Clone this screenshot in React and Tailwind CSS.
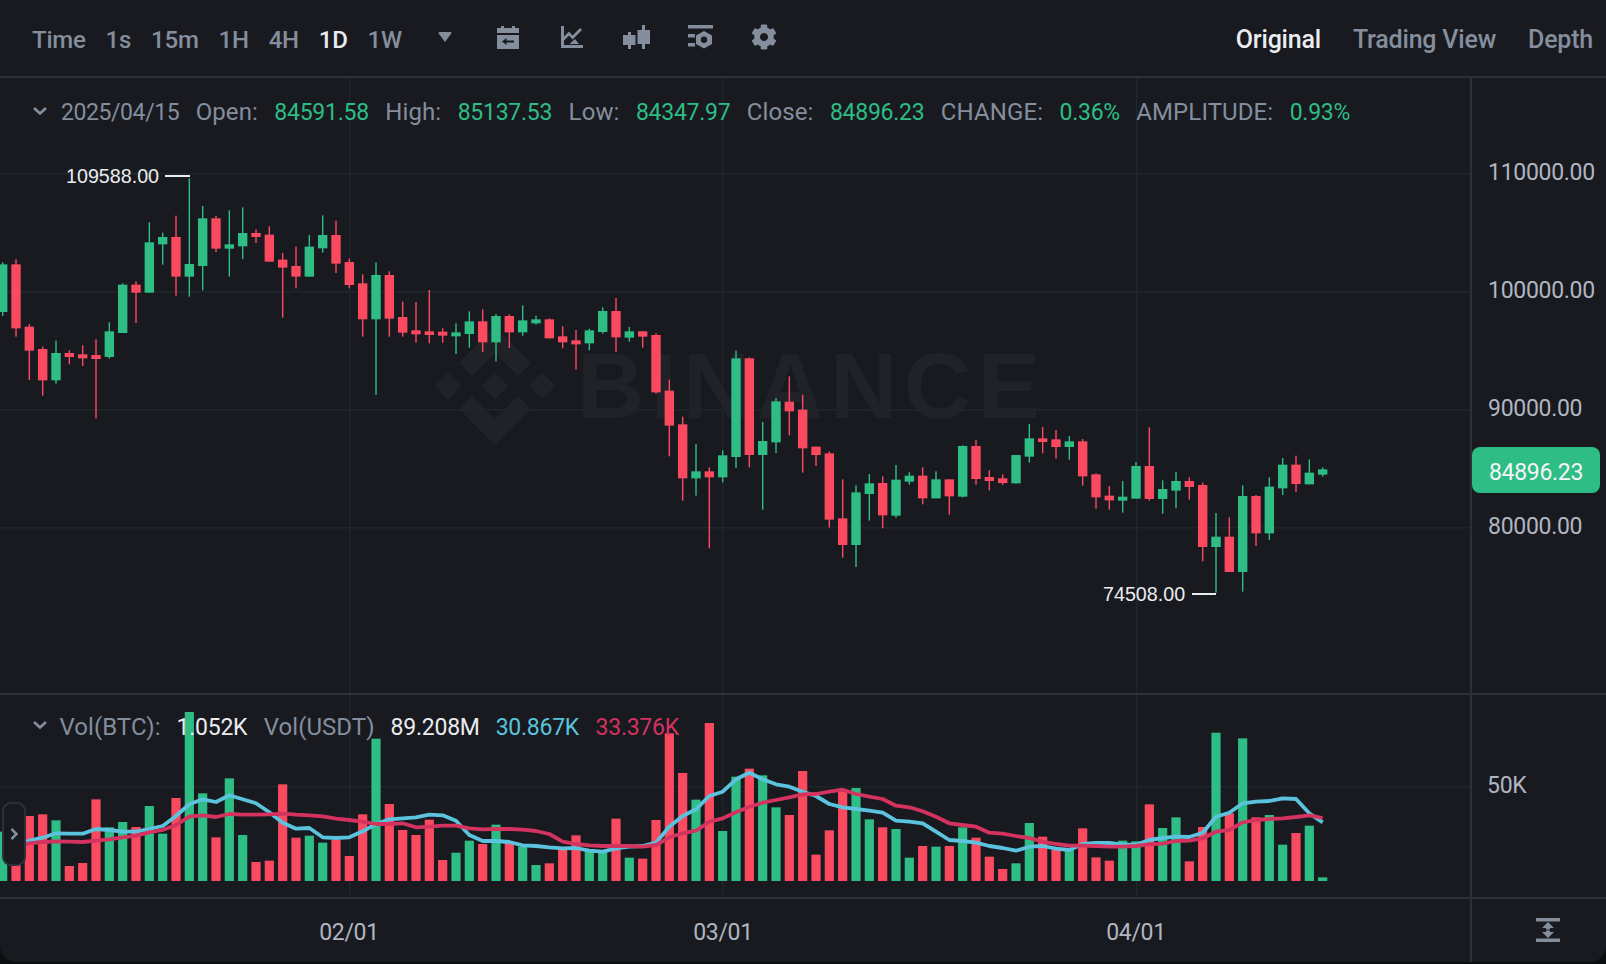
import React from 'react';
import { FaCog } from 'react-icons/fa';

const GREEN = '#2ebd85';
const RED = '#fb4a60';
const GRID = '#1f262b';

// rows: [color, wick top, body top, body bottom, wick bottom], offsets are in thirds of a pixel
const seg = (base, rows) =>
  rows.map(([c, a, b, d, e]) => ({
    up: c === 'g',
    wt: base + a / 3,
    bt: base + b / 3,
    bb: base + d / 3,
    wb: base + e / 3,
  }));

const CANDLES = [
  ...seg(150, [
    ['g', 337, 343, 486, 498], ['r', 328, 343, 535, 560], ['r', 522, 530, 602, 690], ['r', 590, 597, 691, 737],
    ['g', 572, 609, 691, 701], ['r', 601, 609, 621, 643], ['r', 586, 613, 625, 648], ['r', 568, 615, 627, 805],
    ['g', 517, 544, 621, 626], ['g', 400, 404, 549, 549], ['r', 394, 404, 428, 519], ['g', 217, 277, 428, 428],
    ['g', 248, 261, 283, 344], ['r', 197, 261, 380, 437], ['g', 85, 342, 380, 440], ['g', 168, 205, 348, 421],
    ['r', 198, 205, 296, 306], ['g', 181, 283, 296, 380], ['g', 172, 249, 289, 327], ['r', 238, 249, 261, 279],
    ['r', 229, 254, 335, 335], ['r', 309, 329, 353, 503], ['r', 290, 348, 380, 415], ['g', 255, 290, 380, 380],
    ['g', 196, 255, 295, 308], ['r', 212, 255, 341, 369], ['r', 326, 336, 405, 415], ['r', 373, 400, 508, 560],
    ['g', 337, 375, 508, 735], ['r', 364, 375, 506, 560], ['r', 455, 501, 548, 560], ['r', 456, 541, 553, 578],
    ['r', 420, 544, 555, 580], ['r', 535, 545, 557, 578],
  ]),
  ...seg(280, [
    ['g', 130, 157, 169, 222], ['g', 94, 124, 162, 203], ['r', 88, 124, 187, 216], ['g', 102, 108, 187, 244],
    ['r', 103, 108, 157, 204], ['g', 76, 121, 157, 167], ['g', 107, 118, 130, 134], ['r', 115, 118, 175, 175],
    ['r', 139, 169, 187, 205], ['r', 150, 181, 193, 269], ['g', 146, 151, 190, 211], ['g', 82, 93, 156, 161],
    ['r', 54, 93, 172, 216], ['g', 141, 154, 173, 185], ['r', 154, 154, 170, 203], ['r', 160, 165, 337, 341],
    ['r', 299, 332, 437, 529], ['r', 410, 433, 595, 662], ['g', 492, 574, 595, 647], ['r', 562, 574, 592, 805],
    ['g', 511, 526, 592, 607], ['g', 212, 235, 531, 564], ['r', 232, 235, 525, 562], ['g', 426, 483, 525, 689],
    ['g', 354, 364, 487, 519], ['r', 289, 365, 394, 466], ['r', 344, 389, 505, 578], ['r', 500, 500, 525, 558],
    ['r', 514, 520, 719, 743], ['r', 598, 715, 795, 833], ['g', 616, 637, 795, 861],
  ]),
  ...seg(400, [
    ['g', 222, 250, 282, 362], ['r', 229, 249, 346, 385], ['g', 195, 239, 347, 353], ['g', 217, 227, 245, 254],
    ['r', 202, 227, 295, 313], ['g', 214, 238, 295, 295], ['r', 238, 238, 289, 344], ['g', 136, 138, 290, 292],
    ['r', 120, 138, 237, 254], ['r', 211, 231, 243, 271], ['r', 223, 235, 249, 255], ['g', 165, 165, 250, 250],
    ['g', 72, 115, 170, 188], ['r', 81, 115, 126, 160], ['r', 90, 118, 141, 176], ['g', 108, 124, 141, 179],
    ['r', 117, 124, 229, 257], ['r', 220, 223, 292, 326], ['r', 258, 287, 301, 329], ['g', 243, 290, 302, 338],
    ['g', 186, 198, 296, 296], ['r', 82, 198, 297, 302], ['g', 241, 267, 297, 341], ['g', 216, 243, 272, 325],
    ['r', 232, 243, 261, 299], ['r', 248, 255, 441, 484], ['g', 339, 410, 441, 578], ['r', 352, 410, 516, 516],
    ['g', 256, 288, 516, 575], ['r', 285, 288, 400, 438], ['g', 232, 260, 400, 420], ['g', 174, 194, 265, 285],
    ['r', 167, 194, 252, 276], ['g', 178, 218, 253, 253], ['g', 202, 208, 224, 230],
  ]),
];

const VOLUME = [
  425, 400, 378, 373, 391, 528, 519, 328, 412, 396, 411, 348, 431, 324, 66, 310, 442, 265, 435, 516,
  512, 283, 443, 437, 458, 450, 498, 373, 146, 342, 420, 435, 389, 510, 488, 452, 462, 404, 455, 470,
  525, 520, 478, 436, 480, 480, 386, 503, 506, 390, 130, 249, 329, 99, 423, 260, 236, 256, 352, 375,
  243, 494, 421, 300, 294, 388, 412, 417, 503, 468, 470, 468, 412, 443, 500, 537, 520, 399, 440, 480,
  480, 415, 502, 512, 452, 454, 343, 414, 382, 514, 411, 128, 370, 145, 382, 375, 464, 429, 407, 562,
];

const MA_BLUE = [
  483, 465, 452, 443, 430, 431, 431, 417, 420, 425, 425, 417, 408, 378, 343, 328, 336, 316, 328, 340,
  367, 398, 416, 414, 442, 444, 442, 424, 402, 388, 385, 382, 374, 376, 392, 435, 453, 453, 456, 466,
  468, 472, 475, 474, 482, 485, 475, 470, 468, 458, 410, 378, 358, 318, 305, 268, 248, 268, 283, 290,
  305, 318, 342, 352, 357, 362, 368, 392, 395, 400, 425, 450, 453, 458, 468, 474, 482, 470, 468, 476,
  480, 462, 459, 459, 464, 464, 450, 444, 440, 441, 428, 380, 368, 340, 335, 333, 325, 327, 370, 397,
];

const MA_RED = [
  471, 465, 460, 456, 454, 455, 456, 452, 448, 442, 437, 427, 420, 405, 380, 376, 381, 372, 374, 374,
  373, 371, 374, 376, 379, 386, 390, 395, 402, 402, 400, 412, 410, 407, 407, 415, 418, 417, 417, 419,
  423, 432, 455, 462, 466, 468, 468, 468, 470, 465, 442, 430, 422, 395, 385, 367, 350, 338, 330, 322,
  313, 312, 305, 299, 312, 320, 327, 347, 352, 364, 380, 400, 405, 410, 428, 431, 438, 444, 455, 462,
  467, 467, 468, 470, 470, 468, 463, 461, 453, 452, 445, 425, 420, 397, 390, 387, 385, 381, 376, 384,
];

const barX = (i) => 2.67 + (40 * i) / 3;
const volY = (v) => 690 + v / 3;
const linePoints = (list) => list.map((v, i) => `${barX(i).toFixed(1)},${volY(v).toFixed(1)}`).join(' ');

const INTERVALS = ['Time', '1s', '15m', '1H', '4H', '1D', '1W'];

const INFO = [
  ['Open:', '84591.58'],
  ['High:', '85137.53'],
  ['Low:', '84347.97'],
  ['Close:', '84896.23'],
  ['CHANGE:', '0.36%'],
  ['AMPLITUDE:', '0.93%'],
];

const CalendarIcon = () => (
  <svg width="22" height="23" viewBox="0 0 22 23" fill="#848e9c">
    <path d="M4 0h3v2h8V0h3v2h4v5H0V2h4z" />
    <path fillRule="evenodd" d="M0 9h22v14H0zM5 15.5l4.5-3.5v2.5H17v2H9.5V19z" />
  </svg>
);

const IndicatorIcon = () => (
  <svg width="22" height="22" viewBox="0 0 22 22" fill="#848e9c">
    <path d="M0 0h3v19h19v3H0z" />
    <path d="M3 10.5l5-5 3.5 4L19 2l2 2-9.5 9.5L8 9.5l-5 5z" />
    <path d="M14 13l4 5H8.5z" />
  </svg>
);

const CandleIcon = () => (
  <svg width="27" height="24" viewBox="0 0 27 24" fill="#848e9c">
    <path d="M5 7h3v3h4.500v10H8v4H5v-4H0V10h5z" />
    <path d="M19 0h3v5h5v14h-5v5h-3v-5h-4.500V5H19z" />
  </svg>
);

const SettingIcon = () => (
  <svg width="25" height="24" viewBox="0 0 25 24" fill="#848e9c">
    <path d="M0 0h25v3.500H0zM0 9h7v3.500H0zM0 18h7v3.500H0z" />
    <path
      fillRule="evenodd"
      d="M16 6l8 4.500v8.500L16 23.500 8 19v-8.500zM16 11.500a3.200 3.200 0 1 0 0 6.400 3.200 3.200 0 0 0 0-6.400z"
    />
  </svg>
);

const FitIcon = () => (
  <svg width="24" height="24" viewBox="0 0 24 24" fill="#848e9c">
    <path d="M0 0h24v3.500H0zM0 20.500h24V24H0z" />
    <path d="M12 4l6 6h-4v1.500h-4V10H6zM12 20l-6-6h4v-1.500h4V14h4z" />
  </svg>
);

const Chevron = ({ className }) => (
  <svg className={className} width="14" height="8" viewBox="0 0 14 8" fill="none" stroke="#848e9c" strokeWidth="2.600">
    <path d="M1 1l6 5.500L13 1" />
  </svg>
);

const Watermark = () => (
  <g fill="#202227">
    <g transform="translate(495 386)">
      <path d="M0-13.500L13.500 0 0 13.500-13.500 0z" />
      <path d="M-47-13.500L-33.500 0-47 13.500-60.500 0zM47-13.500L60.500 0 47 13.500 33.500 0z" />
      <path d="M0 59l36-36-13-13L0 33-23 10-36 23z" />
      <path d="M0-59l36 36-13 13L0-33-23-10-36-23z" />
    </g>
    <text x="577" y="418" fontFamily="'Liberation Sans', sans-serif" fontWeight="700" fontSize="93" letterSpacing="6.500">
      BINANCE
    </text>
  </g>
);

const PriceChart = () => (
  <svg className="absolute inset-0" width="1470" height="615" viewBox="0 78 1470 615">
    <Watermark />
    {[173, 291, 409, 527].map((y) => (
      <rect key={y} x="0" y={y} width="1470" height="1.500" fill={GRID} />
    ))}
    {[349, 722, 1136].map((x) => (
      <rect key={x} x={x} y="78" width="1.500" height="615" fill={GRID} />
    ))}
    {CANDLES.map((c, i) => (
      <g key={i} fill={c.up ? GREEN : RED}>
        <rect x={barX(i) - 0.7} y={c.wt} width="1.400" height={c.wb - c.wt} />
        <rect x={barX(i) - 4.7} y={c.bt} width="9.400" height={Math.max(c.bb - c.bt, 1)} />
      </g>
    ))}
    <rect x="165" y="175" width="25" height="2" fill="#eaecef" />
    <rect x="1192" y="593" width="24" height="2" fill="#eaecef" />
    <g fontFamily="'Liberation Sans', sans-serif" fontSize="19.700" letterSpacing="0" fill="#eaecef">
      <text x="66" y="183">109588.00</text>
      <text x="1103" y="601">74508.00</text>
    </g>
  </svg>
);

const VolumeChart = () => (
  <svg className="absolute inset-0" width="1470" height="202" viewBox="0 695 1470 202">
    <rect x="0" y="786" width="1470" height="1.500" fill={GRID} />
    {[349, 722, 1136].map((x) => (
      <rect key={x} x={x} y="695" width="1.500" height="202" fill={GRID} />
    ))}
    {VOLUME.map((v, i) => (
      <rect
        key={i}
        x={barX(i) - 4.6}
        y={volY(v)}
        width="9.200"
        height={881 - volY(v)}
        fill={CANDLES[i].up ? GREEN : RED}
      />
    ))}
    <polyline points={linePoints(MA_BLUE)} fill="none" stroke="#5bc3dd" strokeWidth="3.800" strokeLinejoin="round" />
    <polyline points={linePoints(MA_RED)} fill="none" stroke="#d4325f" strokeWidth="3.800" strokeLinejoin="round" />
  </svg>
);

export default function App() {
  return (
    <div className="w-[1606px] h-[964px] overflow-hidden bg-[#0b0e11] font-['Roboto','Noto_Sans',sans-serif] text-[23px] tracking-[-0.3px] text-[#848e9c]">
      <div className="flex h-[962px] flex-col rounded-b-[16px] bg-[#181a20]">
        <header className="flex h-[78px] shrink-0 items-center border-b-2 border-[#2b3139] pl-[32px] pr-[13px] font-medium">
          <nav className="mt-[4px] flex w-[370px] items-center justify-between text-[24px] tracking-[-0.2px]">
            {INTERVALS.map((t) => (
              <span key={t} className={t === '1D' ? 'text-[#eaecef]' : ''}>
                {t}
              </span>
            ))}
          </nav>
          <svg className="mb-[2px] ml-[36px]" width="14" height="10" viewBox="0 0 14 10" fill="#848e9c">
            <path d="M1.500 0h11a1 1 0 0 1 .8 1.600L7 10 .7 1.600A1 1 0 0 1 1.500 0z" />
          </svg>
          <div className="mb-[2px] ml-[24px] flex items-center">
            <span className="flex w-[64px] justify-center"><CalendarIcon /></span>
            <span className="flex w-[64px] justify-center"><IndicatorIcon /></span>
            <span className="flex w-[64px] justify-center"><CandleIcon /></span>
            <span className="flex w-[64px] justify-center"><SettingIcon /></span>
            <span className="flex w-[64px] justify-center"><FaCog size={26} color="#848e9c" /></span>
          </div>
          <div className="ml-auto mt-[4px] flex items-center gap-[32px] text-[25px] tracking-[-0.2px]">
            <span className="text-[#eaecef]">Original</span>
            <span>Trading View</span>
            <span>Depth</span>
          </div>
        </header>

        <section className="flex h-[617px] shrink-0 border-b-2 border-[#2b3139]">
          <div className="relative w-[1470px]">
            <PriceChart />
            <div className="relative flex h-[70px] items-baseline gap-[16.400px] pl-[33px] pt-[16px]">
              <Chevron className="mb-[21px] self-center" />
              <span className="-ml-[2.500px] tracking-[-0.4px]">2025/04/15</span>
              {INFO.map(([label, value]) => (
                <React.Fragment key={label}>
                  <span className="text-[24px] tracking-[0.1px]">{label}</span>
                  <span className="tracking-[-0.25px] text-[#2ebd85]">{value}</span>
                </React.Fragment>
              ))}
            </div>
          </div>
          <aside className="relative flex-1 border-l-2 border-[#2b3139] pt-[78px] pl-[16px] text-[#b0b6c0]">
            <div className="h-[118px]">110000.00</div>
            <div className="h-[118px]">100000.00</div>
            <div className="h-[118px]">90000.00</div>
            <div className="h-[118px]">80000.00</div>
            <div className="absolute left-0 top-[369px] flex h-[46px] w-[128px] items-center justify-center rounded-[8px] bg-[#2ebd85] pt-[6px] text-[#f5f5f5]">
              84896.23
            </div>
          </aside>
        </section>

        <section className="flex h-[204px] shrink-0 border-b-2 border-[#2b3139]">
          <div className="relative w-[1470px]">
            <VolumeChart />
            <div className="relative flex h-[66px] items-baseline pl-[33px] pt-[14px] tracking-[-0.25px]">
              <Chevron className="mb-[20px] self-center" />
              <span className="ml-[12.500px] text-[24px] tracking-[0.05px]">Vol(BTC):</span>
              <span className="ml-[16px] text-[#eaecef]">1.052K</span>
              <span className="ml-[16.500px] text-[24px] tracking-[0.05px]">Vol(USDT)</span>
              <span className="ml-[16px] text-[#eaecef]">89.208M</span>
              <span className="ml-[16px] text-[#5bc3dd]">30.867K</span>
              <span className="ml-[16.500px] text-[#d4325f]">33.376K</span>
            </div>
            <div className="absolute left-[2px] top-[107px] flex h-[64px] w-[24px] items-center justify-center rounded-[9px] border-2 border-[#2b3139] bg-[#181a20]">
              <svg width="8" height="12" viewBox="0 0 8 12" fill="none" stroke="#848e9c" strokeWidth="2.500">
                <path d="M1.500 1l5 5-5 5" />
              </svg>
            </div>
          </div>
          <aside className="flex-1 border-l-2 border-[#2b3139] pt-[74px] pl-[15px] text-[#b0b6c0]">50K</aside>
        </section>

        <footer className="flex flex-1">
          <div className="relative w-[1470px] text-[#b0b6c0]">
            <span className="absolute left-[349px] top-[17px] -translate-x-1/2">02/01</span>
            <span className="absolute left-[723px] top-[17px] -translate-x-1/2">03/01</span>
            <span className="absolute left-[1136px] top-[17px] -translate-x-1/2">04/01</span>
          </div>
          <div className="flex flex-1 justify-center border-l-2 border-[#2b3139] pt-[19px] pl-[18px]">
            <div className="h-[24px] w-[24px]">
              <FitIcon />
            </div>
          </div>
        </footer>
      </div>
    </div>
  );
}
